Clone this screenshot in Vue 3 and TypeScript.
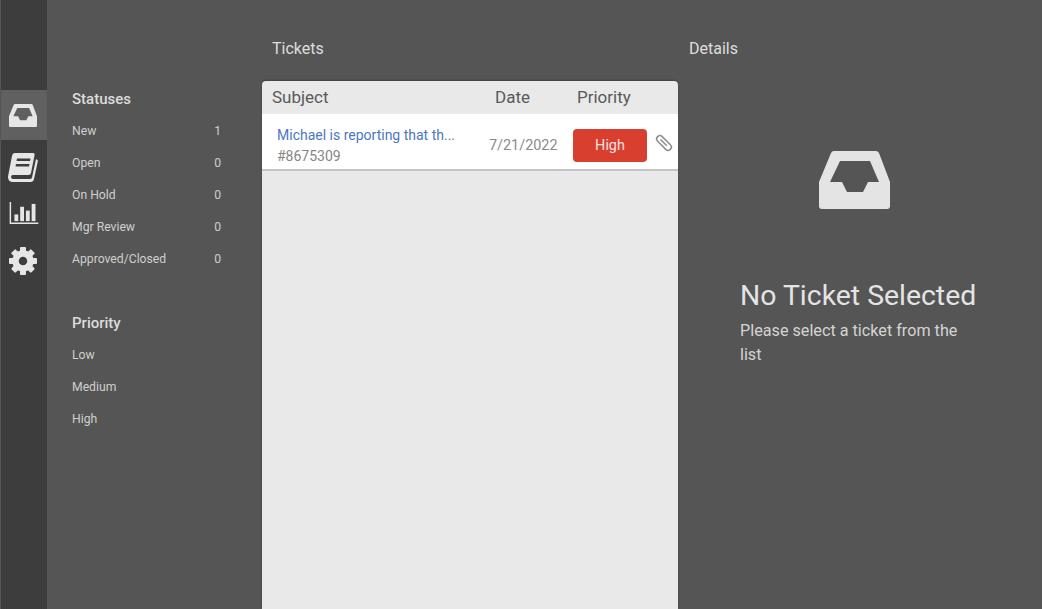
<script setup lang="ts">
interface FilterItem {
  label: string
  count?: number
}

const statuses: FilterItem[] = [
  { label: 'New', count: 1 },
  { label: 'Open', count: 0 },
  { label: 'On Hold', count: 0 },
  { label: 'Mgr Review', count: 0 },
  { label: 'Approved/Closed', count: 0 },
]

const priorities: FilterItem[] = [{ label: 'Low' }, { label: 'Medium' }, { label: 'High' }]

const gearTeeth = [0, 45, 90, 135, 180, 225, 270, 315]

const inboxPath =
  'M15 0H57Q59 0 60 2L71 31V55Q71 58 68 58H3Q0 58 0 55V31L12 2Q13 0 15 0ZM21 10L11 31H23L28 41H44L49 31H60L51 10Z'
</script>

<template>
  <div class="page">
    <nav class="rail">
      <div class="rail-item active">
        <svg class="icon-inbox" viewBox="0 0 71 58"><path :d="inboxPath" fill-rule="evenodd" /></svg>
      </div>
      <div class="rail-item">
        <svg class="icon-book" viewBox="0 0 30 29">
          <path
            fill-rule="evenodd"
            d="M7 0H25Q27 0 26.6 2L23 20Q22.6 22 20.5 22H5Q2.8 22 3 24.2Q3.2 26 5 26H22Q23.5 26 24 24.5L28 6L30 7.5L26 26Q25.4 29 22.5 29H5Q0 29 0 24Q0 23 .3 22L4 3Q4.6 0 7 0ZM9 5.5L8.5 8H22L22.5 5.5ZM8 11L7.5 13.5H21L21.5 11Z"
          />
        </svg>
      </div>
      <div class="rail-item chart-item">
        <svg class="icon-chart" viewBox="0 0 30 23">
          <path d="M0 0H1.5V21.5H30V23H0Z" />
          <rect x="5" y="13" width="4" height="7" />
          <rect x="11" y="5" width="4" height="15" />
          <rect x="17" y="9" width="4" height="11" />
          <rect x="23" y="2" width="4" height="18" />
        </svg>
      </div>
      <div class="rail-item">
        <svg class="icon-gear" viewBox="0 0 28 28">
          <circle cx="14" cy="14" r="7.5" fill="none" stroke="currentColor" stroke-width="6.5" />
          <rect
            v-for="angle in gearTeeth"
            :key="angle"
            x="11"
            y="0"
            width="6"
            height="6"
            rx="1"
            :transform="`rotate(${angle} 14 14)`"
          />
        </svg>
      </div>
    </nav>

    <aside class="filters">
      <h2 class="filter-title">Statuses</h2>
      <div v-for="item in statuses" :key="item.label" class="filter-row">
        <span>{{ item.label }}</span>
        <span>{{ item.count }}</span>
      </div>
      <h2 class="filter-title second">Priority</h2>
      <div v-for="item in priorities" :key="item.label" class="filter-row">
        <span>{{ item.label }}</span>
      </div>
    </aside>

    <section class="tickets">
      <h1 class="section-title">Tickets</h1>
      <div class="card">
        <div class="card-head">
          <span class="col-subject">Subject</span>
          <span class="col-date">Date</span>
          <span>Priority</span>
        </div>
        <div class="ticket">
          <div class="ticket-main">
            <div class="ticket-subject">Michael is reporting that th...</div>
            <div class="ticket-id">#8675309</div>
          </div>
          <div class="ticket-date">7/21/2022</div>
          <div class="badge">High</div>
          <svg class="clip" viewBox="0 0 18 18" fill="none" stroke="currentColor" stroke-width="1.5">
            <g transform="rotate(-45 9 9)">
              <rect x="5.75" y="0" width="6.5" height="18" rx="3.25" />
              <path d="M9 4V13" />
            </g>
          </svg>
        </div>
      </div>
    </section>

    <section class="details">
      <h1 class="section-title">Details</h1>
      <div class="empty">
        <svg class="empty-icon" viewBox="0 0 71 58"><path :d="inboxPath" fill-rule="evenodd" /></svg>
        <div class="empty-title">No Ticket Selected</div>
        <p class="empty-text">Please select a ticket from the list</p>
      </div>
    </section>
  </div>
</template>

<style>
html,
body {
  margin: 0;
  background: #555555;
}
</style>

<style scoped>
.page {
  display: grid;
  grid-template-columns: 47px 215px 416px 1fr;
  height: 609px;
  overflow: hidden;
  background: #555555;
  font-family: Roboto, 'Liberation Sans', sans-serif;
  color: #dcdcdc;
}

.rail {
  margin-left: 1px;
  padding-top: 90px;
  background: #3d3d3d;
  color: #e6e6e6;
}

.rail-item {
  display: flex;
  align-items: center;
  justify-content: center;
  height: 46px;
  padding-right: 3px;
}

.rail-item.active {
  height: 50px;
  background: #606060;
  margin-bottom: 4px;
}

.chart-item {
  padding-right: 0;
  margin-bottom: 2px;
}

.rail svg,
.empty-icon {
  fill: currentColor;
  display: block;
}

.icon-inbox {
  width: 28px;
  height: 23px;
  margin-top: 1px;
}

.icon-book {
  width: 30px;
  height: 29px;
}

.icon-chart {
  width: 30px;
  height: 22px;
}

.icon-gear {
  width: 28px;
  height: 28px;
}

.filters {
  padding: 90px 41px 0 25px;
  color: #cfcfcf;
}

.filter-title {
  margin: 0 0 7px;
  font-size: 15px;
  line-height: 18px;
  font-weight: 500;
  color: #dcdcdc;
}

.filter-title.second {
  margin-top: 39px;
}

.filter-row {
  display: flex;
  justify-content: space-between;
  height: 32px;
  line-height: 32px;
  font-size: 12.2px;
}

.tickets {
  display: flex;
  flex-direction: column;
}

.section-title {
  margin: 0;
  height: 81px;
  padding: 40px 0 0 10px;
  box-sizing: border-box;
  font-size: 16px;
  line-height: 18px;
  font-weight: 400;
  color: #dedede;
}

.card {
  flex: 1;
  background: #e9e9e9;
  border-radius: 4px 4px 0 0;
  box-shadow: 0 -1px 2px rgba(0, 0, 0, 0.25);
}

.card-head {
  display: flex;
  align-items: center;
  height: 31px;
  padding: 0 0 2px 10px;
  font-size: 17px;
  color: #5a5a5a;
}

.col-subject {
  width: 223px;
}

.col-date {
  width: 82px;
}

.ticket {
  display: flex;
  align-items: center;
  height: 57px;
  box-sizing: border-box;
  padding: 7px 0 0 15px;
  background: #ffffff;
  border-bottom: 2px solid #c4c4c4;
}

.ticket-main {
  width: 212px;
}

.ticket-subject {
  font-size: 14px;
  line-height: 20px;
  color: #4a78bf;
}

.ticket-id {
  font-size: 14px;
  line-height: 20px;
  color: #868686;
  margin-top: 1px;
}

.ticket-date {
  width: 84px;
  font-size: 14.4px;
  color: #8a8a8a;
}

.badge {
  width: 74px;
  height: 33px;
  line-height: 33px;
  text-align: center;
  border-radius: 4px;
  background: #d93f2e;
  color: #f4e4e0;
  font-size: 14.4px;
}

.clip {
  width: 18px;
  height: 18px;
  margin-left: 8px;
  margin-top: -5px;
  color: #8e8e8e;
  overflow: visible;
}

.details {
  display: flex;
  flex-direction: column;
  padding-left: 1px;
}

.empty {
  width: 240px;
  margin-left: 61px;
  margin-top: 70px;
}

.empty-icon {
  width: 71px;
  height: 58px;
  margin-left: 79px;
  color: #e4e4e4;
}

.empty-title {
  margin-top: 69px;
  font-size: 28.4px;
  line-height: 36px;
  color: #e4e4e4;
  white-space: nowrap;
}

.empty-text {
  margin: 5px 0 0;
  font-size: 16.2px;
  line-height: 24px;
  color: #d4d4d4;
}
</style>
